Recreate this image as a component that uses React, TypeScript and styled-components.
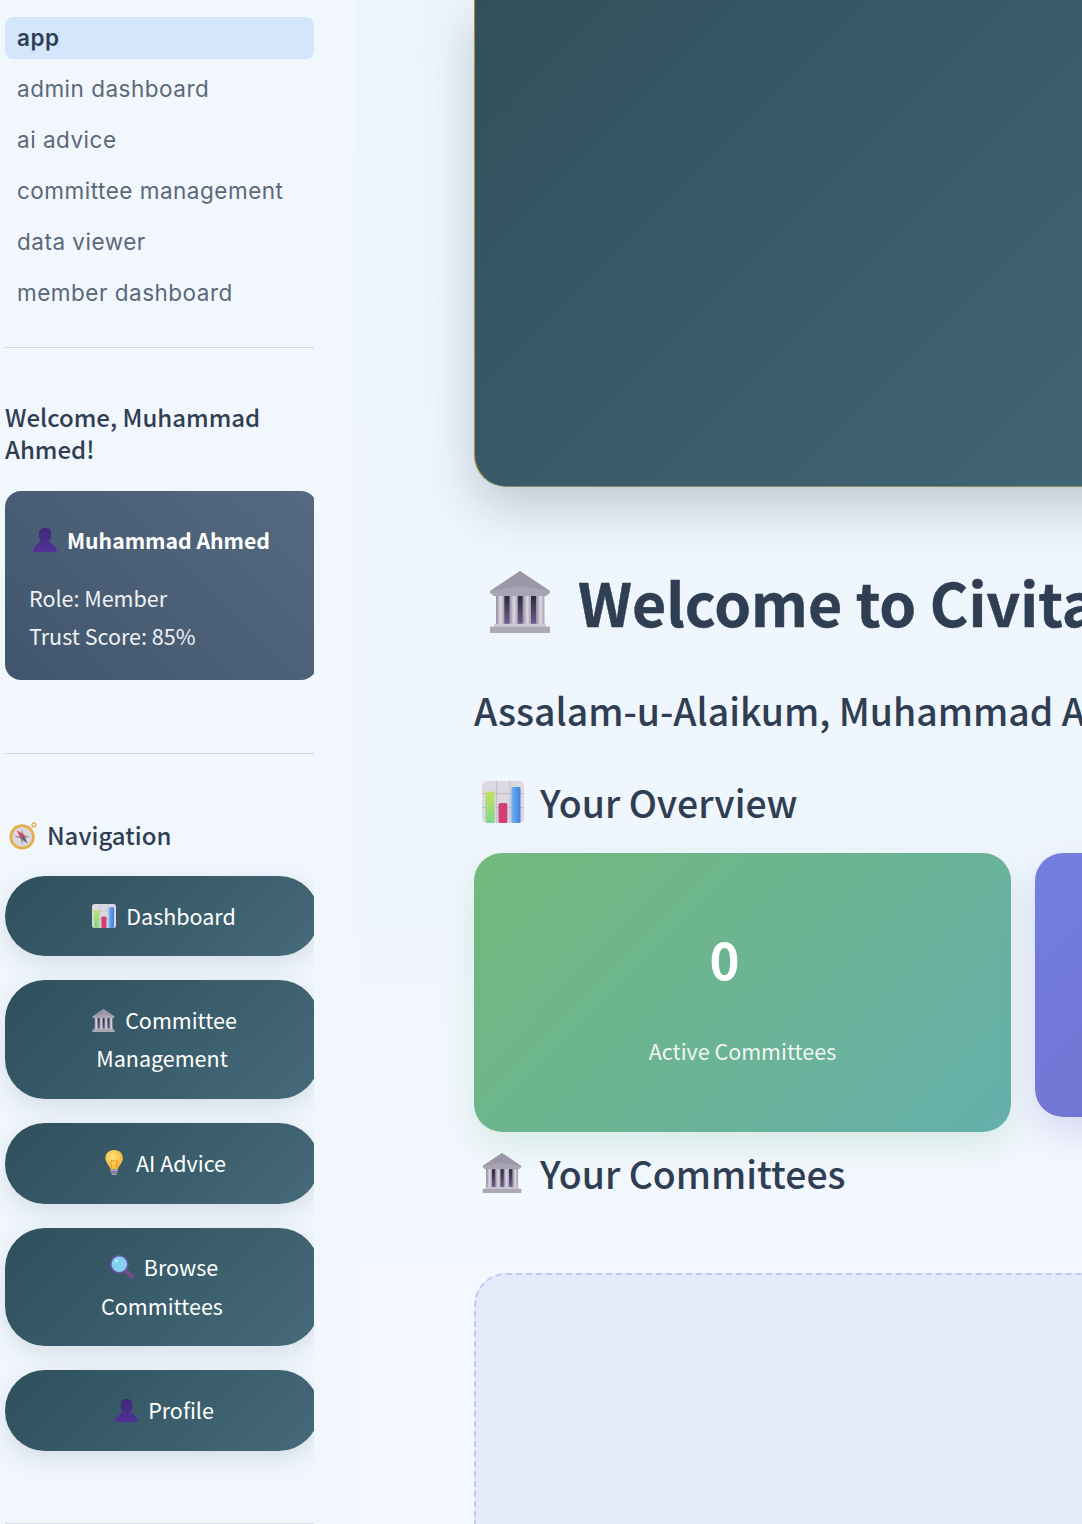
import React from "react";
import styled, { createGlobalStyle } from "styled-components";

const GlobalStyle = createGlobalStyle`
  html, body {
    margin: 0;
    padding: 0;
    height: 100%;
    overflow: hidden;
    background: #f2f7fe;
  }
  * {
    box-sizing: border-box;
  }
`;

const BankIcon = ({ size }: { size: number }) => (
  <svg width={size} height={size} viewBox="1 1 30 31">
    <defs>
      <linearGradient id="bankStone" x1="0" y1="0" x2="1" y2="0">
        <stop offset="0" stopColor="#918c9e" />
        <stop offset="0.55" stopColor="#dbd8e2" />
        <stop offset="1" stopColor="#a5a0b0" />
      </linearGradient>
      <linearGradient id="bankDark" x1="0" y1="0" x2="0" y2="1">
        <stop offset="0" stopColor="#2b2838" />
        <stop offset="1" stopColor="#6f6090" />
      </linearGradient>
    </defs>
    <rect x="4" y="13" width="24" height="15" fill="url(#bankDark)" />
    <rect x="4" y="13" width="4.2" height="15" fill="url(#bankStone)" />
    <rect x="10.7" y="13" width="4.2" height="15" fill="url(#bankStone)" />
    <rect x="17.3" y="13" width="4.2" height="15" fill="url(#bankStone)" />
    <rect x="24" y="13" width="4.2" height="15" fill="url(#bankStone)" />
    <path d="M16 1 L31 11 V12 L29 13.5 H3 L1 12 V11 Z" fill="#a9a4b3" />
    <path d="M16 1 L31 11 L16 8.5 L1 11 Z" fill="#8e899a" opacity="0.5" />
    <rect x="3" y="27.4" width="26" height="1.5" fill="#cbc8d3" />
    <rect x="1" y="28.8" width="30" height="3.2" fill="#aca8b6" />
  </svg>
);

const ChartIcon = ({ size }: { size: number }) => (
  <svg width={size} height={size} viewBox="1 1 30 30">
    <defs>
      <linearGradient id="chartGreen" x1="0" y1="0" x2="0" y2="1">
        <stop offset="0" stopColor="#c3df62" />
        <stop offset="1" stopColor="#7fd98a" />
      </linearGradient>
      <linearGradient id="chartBlue" x1="0" y1="0" x2="1" y2="0">
        <stop offset="0" stopColor="#6db4f5" />
        <stop offset="1" stopColor="#3f7fd8" />
      </linearGradient>
    </defs>
    <rect x="1" y="1" width="30" height="30" rx="3.5" fill="#dcd9e3" />
    <path d="M11.5 1 V31 M21 1 V31 M1 10 H31 M1 20 H31" stroke="#bdb9c7" strokeWidth="0.7" />
    <rect x="3.4" y="8.5" width="6.6" height="22.5" rx="1.2" fill="url(#chartGreen)" />
    <rect x="12.8" y="16.7" width="6.3" height="14.3" rx="1.2" fill="#d23f72" />
    <rect x="22" y="5.2" width="6.5" height="25.8" rx="1.2" fill="url(#chartBlue)" />
  </svg>
);

const CompassIcon = ({ size }: { size: number }) => (
  <svg width={size} height={size} viewBox="0 0 32 32">
    <circle cx="27.5" cy="4.2" r="2.2" fill="none" stroke="#e0a93f" strokeWidth="1.4" />
    <circle cx="14.5" cy="17.5" r="14" fill="#e2ad4b" />
    <circle cx="14.5" cy="17.5" r="11" fill="#dcd8e1" />
    <path d="M14.5 9 L16.5 15.5 L23 17.5 L16.5 19.5 L14.5 26 L12.5 19.5 L6 17.5 L12.5 15.5 Z" fill="#a19da9" />
    <path d="M8.5 10 L16.5 15.5 L13 19 Z" fill="#e0405f" />
    <path d="M20.5 25 L13 19 L16.5 15.5 Z" fill="#63606b" />
  </svg>
);

const BulbIcon = ({ size }: { size: number }) => (
  <svg width={(size * 22) / 30} height={size} viewBox="5 1 22 30">
    <defs>
      <radialGradient id="bulbGlow" cx="0.4" cy="0.35" r="0.7">
        <stop offset="0" stopColor="#ffe27a" />
        <stop offset="1" stopColor="#f3b02f" />
      </radialGradient>
    </defs>
    <path
      d="M16 1 C9 1 5.5 6 5.5 11 C5.5 16 10 19 11.5 24 H20.5 C22 19 26.5 16 26.5 11 C26.5 6 23 1 16 1 Z"
      fill="url(#bulbGlow)"
    />
    <path d="M13 23 L12 14 H20 L19 23" fill="none" stroke="#d9932a" strokeWidth="1" />
    <rect x="11.5" y="24" width="9" height="2.2" rx="1" fill="#b4a9c4" />
    <rect x="11.5" y="26.4" width="9" height="2.2" rx="1" fill="#8f83a6" />
    <rect x="13" y="28.8" width="6" height="2.2" rx="1" fill="#a99dbb" />
  </svg>
);

const SearchIcon = ({ size }: { size: number }) => (
  <svg width={size} height={size} viewBox="1 1 31 31">
    <path d="M20 20 L29 29" stroke="#7d4a8e" strokeWidth="5.5" strokeLinecap="round" />
    <circle cx="13" cy="13" r="11" fill="#83d2f0" stroke="#6b54a8" strokeWidth="2" />
    <circle cx="9.5" cy="8.5" r="1.8" fill="#d6f2fb" />
  </svg>
);

const UserIcon = ({ size }: { size: number }) => (
  <svg width={size} height={size} viewBox="1 1 30 30">
    <defs>
      <linearGradient id="userBody" x1="0" y1="0" x2="0" y2="1">
        <stop offset="0" stopColor="#3f2a78" />
        <stop offset="1" stopColor="#52309a" />
      </linearGradient>
    </defs>
    <path
      d="M8.5 7 C8.5 2.5 12 1 16 1 C20 1 23.5 2.5 23.5 7 V12 C23.5 15 22 17 20.5 18.5 C25 20 30 24 31 31 H1 C2 24 7 20 11.5 18.5 C10 17 8.5 15 8.5 12 Z"
      fill="url(#userBody)"
    />
  </svg>
);

const sideLinks = [
  "admin dashboard",
  "ai advice",
  "committee management",
  "data viewer",
  "member dashboard",
];

const App = () => {
  return (
    <>
      <GlobalStyle />
      <Page>
        <Sidebar>
          <SideInner>
            <PageNav>
              <PageLink $active>app</PageLink>
              {sideLinks.map((l) => (
                <PageLink key={l}>{l}</PageLink>
              ))}
            </PageNav>
            <Rule $top={33} />
            <WelcomeTitle>Welcome, Muhammad Ahmed!</WelcomeTitle>
            <UserCard>
              <UserName>
                <UserIcon size={24} />
                Muhammad Ahmed
              </UserName>
              <UserMeta>Role: Member</UserMeta>
              <UserMeta>Trust Score: 85%</UserMeta>
            </UserCard>
            <Rule $top={73} />
            <NavTitle>
              <CompassIcon size={29} />
              Navigation
            </NavTitle>
            <NavButtons>
              <NavButton>
                <Glyph>
                  <ChartIcon size={24} />
                </Glyph>
                Dashboard
              </NavButton>
              <NavButton>
                <Glyph>
                  <BankIcon size={23} />
                </Glyph>
                Committee Management
              </NavButton>
              <NavButton>
                <Glyph $inset={3}>
                  <BulbIcon size={25} />
                </Glyph>
                AI Advice
              </NavButton>
              <NavButton>
                <Glyph>
                  <SearchIcon size={24} />
                </Glyph>
                Browse Committees
              </NavButton>
              <NavButton>
                <Glyph>
                  <UserIcon size={23} />
                </Glyph>
                Profile
              </NavButton>
            </NavButtons>
            <Rule $top={72} />
          </SideInner>
        </Sidebar>
        <Main>
          <Hero />
          <Title>
            <BankIcon size={62} />
            Welcome to Civitas
          </Title>
          <Greeting>Assalam-u-Alaikum, Muhammad Ahmed</Greeting>
          <SectionTitle $top={38} $gap={16}>
            <ChartIcon size={42} />
            Your Overview
          </SectionTitle>
          <Stats>
            <GreenCard>
              <StatValue>0</StatValue>
              <StatLabel>Active Committees</StatLabel>
            </GreenCard>
            <PurpleCard />
          </Stats>
          <SectionTitle $top={17} $gap={18}>
            <BankIcon size={40} />
            Your Committees
          </SectionTitle>
          <EmptyBox />
        </Main>
      </Page>
    </>
  );
};

export default App;

const Page = styled.div`
  display: flex;
  width: 1082px;
  height: 1524px;
  overflow: hidden;
  font-family: "Noto Sans CJK SC", "Liberation Sans", sans-serif;
  color: #2c3e50;
`;

const Sidebar = styled.aside`
  flex: 0 0 354px;
  padding-left: 5px;
  background: #f2f7fe;
`;

const SideInner = styled.div`
  width: 309px;
  padding-top: 17px;
  clip-path: inset(0 0 0 -10px);
`;

const PageNav = styled.nav`
  display: flex;
  flex-direction: column;
  gap: 9px;
`;

const PageLink = styled.a<{ $active?: boolean }>`
  display: block;
  height: 42px;
  padding-left: 12px;
  border-radius: 8px;
  font-family: "Inter", sans-serif;
  font-size: 22.5px;
  letter-spacing: 0.5px;
  line-height: ${(p) => (p.$active ? 42 : 41)}px;
  font-weight: ${(p) => (p.$active ? 600 : 400)};
  color: ${(p) => (p.$active ? "#2f3e52" : "#5b6879")};
  background: ${(p) => (p.$active ? "#d3e6fc" : "transparent")};
`;

const Rule = styled.hr<{ $top: number }>`
  margin: ${(p) => p.$top}px 0 0;
  border: 0;
  border-top: 1px solid #cfd6e4;
`;

const WelcomeTitle = styled.h2`
  margin: 53px 0 24px;
  font-size: 24px;
  line-height: 32px;
  font-weight: 500;
  color: #2f3e52;
`;

const UserCard = styled.div`
  width: 312px;
  height: 189px;
  margin-top: 26px;
  padding: 24px;
  border-radius: 16px;
  background: linear-gradient(45deg, #41566c, #556a80);
  color: #eef1f4;
`;

const UserName = styled.div`
  display: flex;
  align-items: center;
  gap: 10px;
  height: 50px;
  margin: 0 0 14px 4px;
  font-size: 21.2px;
  line-height: 50px;
  font-weight: 700;
  color: #ffffff;
`;

const UserMeta = styled.p`
  margin: 0;
  font-size: 21.5px;
  line-height: 38px;
`;

const NavTitle = styled.h3`
  display: flex;
  align-items: center;
  gap: 9px;
  height: 36px;
  margin: 63px 0 23px 4px;
  font-size: 24px;
  line-height: 36px;
  font-weight: 500;
  color: #2f3e52;
`;

const NavButtons = styled.div`
  display: flex;
  flex-direction: column;
  gap: 24px;
`;

const NavButton = styled.button`
  width: 314px;
  padding: 20.5px 45px 21.5px;
  border: 0;
  border-radius: 40px;
  background: linear-gradient(135deg, #2f4f5c, #456a7a);
  box-shadow: 0 8px 25px rgba(47, 79, 92, 0.15);
  font-family: inherit;
  font-size: 21.5px;
  line-height: 38.4px;
  color: #ffffff;
  text-align: center;
`;

// the emoji box keeps a fixed advance, the drawing sits at its right side
const Glyph = styled.span<{ $inset?: number }>`
  display: inline-flex;
  justify-content: flex-end;
  width: 28px;
  margin-right: 10px;
  padding-right: ${(p) => p.$inset ?? 0}px;
  vertical-align: -3px;
`;

const Main = styled.main`
  flex: 1 1 auto;
  min-width: 0;
  padding-left: 120px;
  overflow: hidden;
  background: linear-gradient(180deg, #edf5fc 0%, #f0f6fd 60%, #f4f8ff 85%);
`;

const Hero = styled.div`
  width: 900px;
  height: 487px;
  border-radius: 0 0 0 32px;
  border-left: 1px solid #b8862b;
  border-bottom: 1px solid #8a8a5a;
  background: linear-gradient(135deg, #31505c, #456a7c);
  box-shadow: 0 20px 50px rgba(47, 79, 92, 0.26);
`;

const Title = styled.h1`
  display: flex;
  align-items: center;
  gap: 27px;
  width: 900px;
  height: 80px;
  margin: 75px 0 0 15px;
  font-size: 59px;
  line-height: 80px;
  font-weight: 700;
  -webkit-text-stroke: 0.5px #2f3e52;
  color: #2f3e52;
  white-space: nowrap;
`;

const Greeting = styled.h2`
  width: 900px;
  height: 60px;
  margin: 38px 0 0;
  font-size: 37.4px;
  line-height: 60px;
  font-weight: 500;
  color: #2f3e52;
  white-space: nowrap;
`;

const SectionTitle = styled.h2<{ $top: number; $gap: number }>`
  display: flex;
  align-items: center;
  gap: ${(p) => p.$gap}px;
  height: 48px;
  margin: ${(p) => p.$top}px 0 0 8px;
  font-size: 37.4px;
  line-height: 48px;
  font-weight: 500;
  color: #2f3e52;
`;

const Stats = styled.div`
  display: flex;
  align-items: flex-start;
  gap: 24px;
  width: 1100px;
  margin-top: 27px;
`;

const GreenCard = styled.div`
  flex: 0 0 537px;
  height: 279px;
  padding-top: 69px;
  border-radius: 28px;
  background: linear-gradient(135deg, #71b97b, #66afac);
  box-shadow: 0 15px 35px rgba(113, 185, 123, 0.2);
  text-align: center;
  color: #ffffff;
`;

const PurpleCard = styled.div`
  flex: 0 0 537px;
  height: 264px;
  border-radius: 28px;
  background: linear-gradient(135deg, #737fdf, #7066c2);
  box-shadow: 0 15px 35px rgba(112, 102, 194, 0.2);
`;

const StatValue = styled.div`
  margin-right: 36px;
  font-size: 51px;
  line-height: 72px;
  font-weight: 700;
`;

const StatLabel = styled.div`
  margin-top: 39px;
  font-size: 21.5px;
  line-height: 36px;
  color: #f1f6f2;
`;

const EmptyBox = styled.div`
  width: 900px;
  height: 400px;
  margin-top: 76px;
  border: 2px dashed #bdcaf5;
  border-radius: 32px;
  background: #e4eafa;
`;
